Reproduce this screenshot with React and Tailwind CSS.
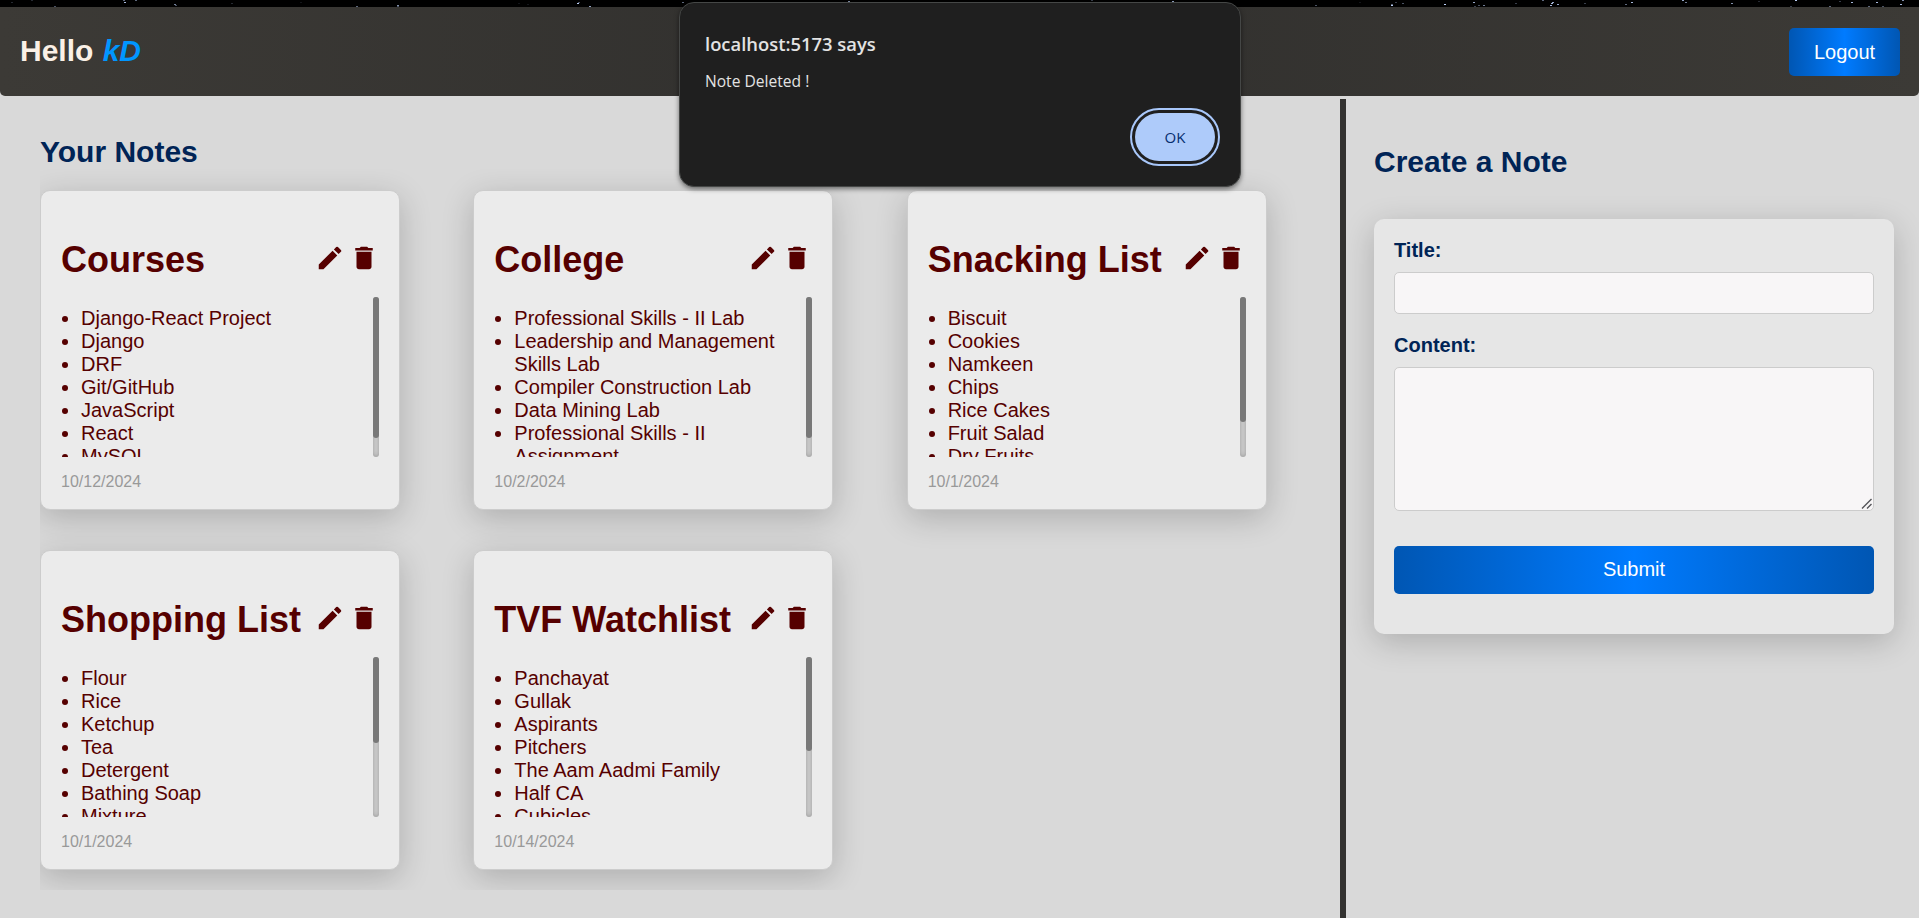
import { MdDelete, MdEdit } from "react-icons/md";

const notes = [
  {
    title: "Courses",
    items: ["Django-React Project", "Django", "DRF", "Git/GitHub", "JavaScript", "React", "MySQL"],
    date: "10/12/2024",
    thumb: 141,
  },
  {
    title: "College",
    items: [
      "Professional Skills - II Lab",
      "Leadership and Management Skills Lab",
      "Compiler Construction Lab",
      "Data Mining Lab",
      "Professional Skills - II Assignment",
    ],
    date: "10/2/2024",
    thumb: 141,
  },
  {
    title: "Snacking List",
    items: ["Biscuit", "Cookies", "Namkeen", "Chips", "Rice Cakes", "Fruit Salad", "Dry Fruits"],
    date: "10/1/2024",
    thumb: 125,
  },
  {
    title: "Shopping List",
    items: ["Flour", "Rice", "Ketchup", "Tea", "Detergent", "Bathing Soap", "Mixture"],
    date: "10/1/2024",
    thumb: 86,
  },
  {
    title: "TVF Watchlist",
    items: ["Panchayat", "Gullak", "Aspirants", "Pitchers", "The Aam Aadmi Family", "Half CA", "Cubicles"],
    date: "10/14/2024",
    thumb: 94,
  },
];

// [x, y, brightness]
const stars = [
  [11, 2, 0.2], [31, 0, 0.2], [54, 6, 0.4], [123, 0, 0.5], [124, 2, 0.9], [135, 0, 0.5], [174, 4, 0.6], [175, 5, 0.4],
  [231, 3, 0.2], [300, 2, 0.1], [356, 6, 0.5], [397, 5, 0.7], [397, 6, 0.4], [518, 3, 0.1], [527, 4, 0.1], [577, 3, 1],
  [578, 2, 0.4], [589, 6, 0.8], [682, 2, 0.5], [848, 1, 0.7], [1091, 0, 0.3], [1172, 1, 0.8],
  [1315, 5, 0.4], [1359, 2, 0.1], [1391, 5, 1], [1391, 4, 0.5], [1395, 2, 0.3], [1402, 3, 0.4], [1444, 4, 1],
  [1473, 2, 0.8], [1474, 6, 0.3], [1478, 5, 0.4], [1483, 5, 0.6], [1515, 3, 0.3], [1542, 0, 0.5], [1550, 5, 0.9],
  [1551, 3, 0.9], [1552, 2, 0.8], [1557, 4, 0.8], [1584, 3, 0.3], [1625, 4, 0.5], [1631, 2, 0.9], [1682, 0, 0.8],
  [1685, 2, 0.6], [1731, 3, 0.7], [1758, 1, 0.2], [1790, 6, 0.3], [1795, 0, 1], [1829, 6, 0.5], [1839, 1, 0.3],
  [1851, 2, 0.9], [1868, 6, 0.5], [1876, 2, 0.9], [1882, 6, 0.4], [1900, 4, 0.9], [1902, 0, 0.7],
];

function NoteCard({ note }) {
  return (
    <article className="flex h-80 w-[360px] flex-col rounded-[10px] border border-[#ccc] bg-[#ebebeb] p-5 shadow-[0_8px_32px_rgba(0,0,0,0.2)]">
      <div className="mt-7 flex h-[42px] items-center justify-between text-[#560000]">
        <h1 className="text-[36px] leading-[41px] font-bold whitespace-nowrap">{note.title}</h1>
        <div className="-mt-[3px] flex gap-1">
          <MdEdit className="size-[30px]" />
          <MdDelete className="size-[30px]" />
        </div>
      </div>
      <div className="mt-[17px] flex h-40 shrink-0 overflow-hidden">
        <ul className="flex-1 list-disc pt-2.5 pr-5 pl-5 text-[20px] leading-[23px] text-[#560000]">
          {note.items.map((item) => (
            <li key={item}>{item}</li>
          ))}
        </ul>
        <div className="h-40 w-1.5 rounded-[3px] bg-[#d4d4d4] shadow-[inset_0_0_5px_rgba(0,0,0,0.3)]">
          <div className="w-1.5 rounded-[3px] bg-[#787878]" style={{ height: note.thumb }} />
        </div>
      </div>
      <p className="mt-4 text-base leading-[18px] text-[#999]">{note.date}</p>
    </article>
  );
}

function AlertDialog() {
  return (
    <div
      role="alertdialog"
      className="absolute top-[2px] left-[679px] flex h-[185px] w-[562px] flex-col rounded-[15px] border border-[#454746] bg-[#1f1f1f] px-[25px] font-['Open_Sans',sans-serif] shadow-[0_2px_5px_rgba(0,0,0,0.5)]"
    >
      <h2 className="mt-[27px] text-[18.4px] leading-7 font-semibold text-[#e3e3e3]">localhost:5173 says</h2>
      <p className="mt-[13px] text-[15.6px] leading-5 text-[#e3e3e3]">Note Deleted !</p>
      <button className="mt-[22px] h-12 w-20 self-end rounded-[24px] bg-[#aecbfa] text-[15px] font-medium text-[#062e6f] outline-2 outline-offset-3 outline-[#a8c7fa]">
        OK
      </button>
    </div>
  );
}

export default function App() {
  return (
    <div className="relative flex h-[918px] w-[1919px] flex-col overflow-hidden bg-[#d9d9d9] font-['Liberation_Sans',Arial,sans-serif]">
      <div className="h-[7px] shrink-0 bg-black">
        <svg width="1919" height="7" className="block">
          {stars.map(([x, y, o], i) => (
            <rect key={i} x={x} y={y} width="2" height="1" fill="#b9cdf5" opacity={o} />
          ))}
        </svg>
      </div>
      <header className="flex h-[89px] shrink-0 items-center justify-between rounded-b-[5px] bg-linear-to-r from-[#3c3a36] via-[#302f2d] to-[#3c3a36] pr-[19px] pl-5">
        <h2 className="-mt-0.5 text-[30px] leading-[34px] font-bold text-[#faf0e6]">
          Hello <em className="ml-px text-[#0096ff]">kD</em>
        </h2>
        <button className="h-12 w-[111px] rounded-[5px] bg-linear-to-r from-[#0056b3] via-[#007bff] to-[#0056b3] text-[20px] text-white">
          Logout
        </button>
      </header>

      <main className="flex flex-1">
        <section className="w-[1340px] pt-[38px] pl-10">
          <h2 className="text-[30px] leading-[35px] font-bold text-[#002456]">Your Notes</h2>
          <div className="grid h-[721px] grid-cols-3 content-start gap-y-10 overflow-hidden pt-[21px]">
            {notes.map((note) => (
              <NoteCard key={note.title} note={note} />
            ))}
          </div>
        </section>
        <div className="mt-[3px] w-1.5 bg-[#333230]" />
        <section className="flex-1 pt-[49px] pr-[25px] pl-7">
          <h2 className="text-[30px] leading-[34px] font-bold text-[#002456]">Create a Note</h2>
          <form className="mt-10 flex h-[415px] w-[520px] flex-col rounded-[10px] bg-[#e6e6e6] px-5 pt-5 shadow-[0_8px_32px_rgba(0,0,0,0.2)]">
            <label htmlFor="title" className="text-[20px] leading-[23px] font-bold text-[#002456]">
              Title:
            </label>
            <input id="title" className="mt-2.5 h-[42px] rounded-[5px] border border-[#ccc] bg-[#f8f6f7]" />
            <label htmlFor="content" className="mt-5 text-[20px] leading-[23px] font-bold text-[#002456]">
              Content:
            </label>
            <div className="relative mt-2.5 h-36">
              <textarea
                id="content"
                className="block h-36 w-full resize-none rounded-[5px] border border-[#ccc] bg-[#f8f6f7]"
              />
              <svg width="11" height="11" className="pointer-events-none absolute right-[2px] bottom-[2px]">
                <path d="M1 10.5 10.5 1M6 10.5 10.5 6" stroke="#55555a" strokeWidth="1.4" />
              </svg>
            </div>
            <button
              type="button"
              className="mt-[35px] h-12 rounded-[5px] bg-linear-to-r from-[#0056b3] via-[#007bff] to-[#0056b3] pb-0.5 text-[20px] text-white"
            >
              Submit
            </button>
          </form>
        </section>
      </main>

      <AlertDialog />
    </div>
  );
}
